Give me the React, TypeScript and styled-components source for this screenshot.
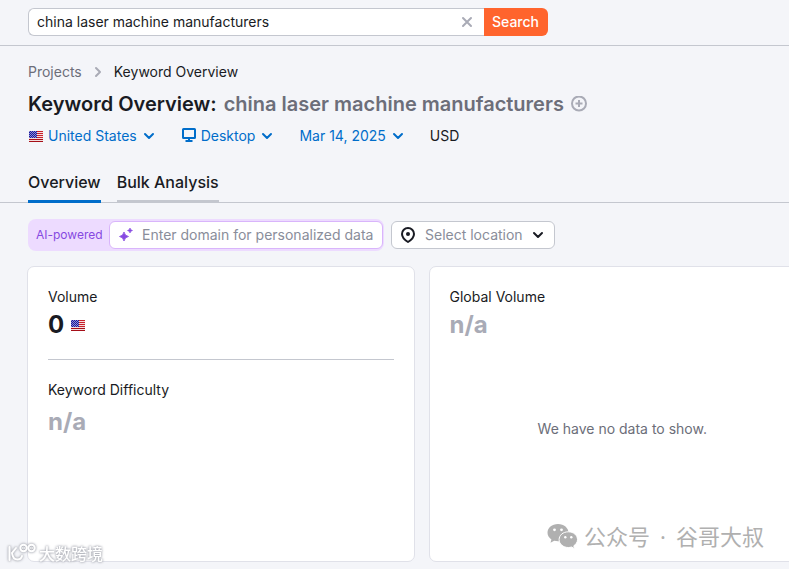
import React, { useState } from "react";
import styled, { createGlobalStyle } from "styled-components";

const GlobalStyle = createGlobalStyle`
  *, *::before, *::after { box-sizing: border-box; }
  body {
    margin: 0;
    background: #f4f5f9;
    color: #191b23;
    font-family: Inter, "Noto Sans CJK SC", sans-serif;
    font-size: 14px;
    line-height: 20px;
  }
  button, input { font: inherit; }
`;

const Page = styled.div`
  position: relative;
  min-height: 100vh;
  overflow: hidden;
  padding-bottom: 7px;
`;

const Header = styled.header`
  padding: 8px 28px 9px;
  border-bottom: 1px solid #c4c7cf;
`;

const SearchForm = styled.form`
  display: flex;
  height: 28px;
  max-width: 520px;
`;

const SearchField = styled.div`
  display: flex;
  flex: 1;
  align-items: center;
  background: #fff;
  border: 1px solid #c4c7cf;
  border-right: 0;
  border-radius: 6px 0 0 6px;
`;

const SearchInput = styled.input`
  flex: 1;
  min-width: 0;
  padding: 0 8px;
  border: 0;
  outline: 0;
  background: transparent;
  color: #191b23;
`;

const IconButton = styled.button`
  display: inline-flex;
  align-items: center;
  padding: 0;
  border: 0;
  background: none;
  color: #a9abb6;
  cursor: pointer;
`;

const ClearButton = styled(IconButton)`
  padding: 0 11px 0 10px;
`;

const SubmitButton = styled.button`
  padding: 0 9px 0 8px;
  border: 0;
  border-radius: 0 6px 6px 0;
  background: #ff642d;
  color: #fff;
  font-weight: 500;
  cursor: pointer;
`;

const Intro = styled.section`
  padding: 16px 28px 0;
`;

const Breadcrumbs = styled.nav`
  display: flex;
  align-items: center;
  gap: 12px;
`;

const Crumb = styled.a`
  color: #6c6e79;
  text-decoration: none;
  &[aria-current] { color: #191b23; }
`;

const TitleRow = styled.div`
  display: flex;
  align-items: center;
  gap: 7px;
  margin-top: 8px;
`;

const Title = styled.h1`
  margin: 0;
  font-size: 20px;
  font-weight: 600;
  line-height: 28px;
  white-space: nowrap;
`;

const Keyword = styled.span`
  margin-left: 7px;
  color: #6c6e79;
`;

const Filters = styled.div`
  display: flex;
  align-items: center;
  gap: 26px;
  margin-top: 8px;
  padding-left: 1px;
`;

const FilterButton = styled.button`
  display: inline-flex;
  align-items: center;
  gap: 5px;
  padding: 0;
  border: 0;
  background: none;
  color: #006dca;
  white-space: nowrap;
  cursor: pointer;
`;

const FilterLabel = styled.span`
  margin-right: 1px;
`;

const Tabs = styled.nav`
  display: flex;
  gap: 16px;
  margin-top: 24px;
  padding: 0 28px;
  border-bottom: 1px solid #c4c7cf;
`;

const Tab = styled.a<{ $active?: boolean }>`
  margin-bottom: -1px;
  padding: 0 0 6px;
  border-bottom: 3px solid ${(p) => (p.$active ? "#006dca" : "#c4c7cf")};
  color: #191b23;
  font-size: 16px;
  font-weight: 500;
  line-height: 24px;
  text-decoration: none;
`;

const Toolbar = styled.div`
  display: flex;
  align-items: center;
  gap: 7px;
  padding: 16px 28px 15px;
`;

const AiGroup = styled.label`
  display: flex;
  align-items: center;
  width: 356px;
  padding: 2px 1px 2px 8px;
  border-radius: 8px;
  background: #eddbff;
  color: #8649e1;
`;

const AiCaption = styled.span`
  width: 67px;
  font-size: 12px;
  white-space: nowrap;
`;

const AiField = styled.span`
  display: flex;
  flex: 1;
  align-items: center;
  gap: 8px;
  height: 28px;
  margin-left: 6px;
  padding-left: 8px;
  border: 1px solid #d9b5fb;
  border-radius: 6px;
  background: #fff;
`;

const DomainInput = styled.input`
  flex: 1;
  min-width: 0;
  padding: 0;
  border: 0;
  outline: 0;
  background: transparent;
  &::placeholder { color: #898d9a; opacity: 1; }
`;

const LocationButton = styled.button`
  display: inline-flex;
  align-items: center;
  gap: 9px;
  height: 28px;
  padding: 0 10px 0 8px;
  border: 1px solid #c4c7cf;
  border-radius: 6px;
  background: #fff;
  color: #191b23;
  white-space: nowrap;
  cursor: pointer;
`;

const LocationLabel = styled.span`
  color: #898d9a;
`;

const Cards = styled.main`
  display: grid;
  grid-template-columns: repeat(2, minmax(0, 1fr));
  gap: 14px;
  margin: 0 -27px 0 27px;
`;

const Card = styled.section`
  display: flex;
  flex-direction: column;
  min-height: 296px;
  padding: 20px;
  border: 1px solid #e0e1e9;
  border-radius: 7px;
  background: #fff;
`;

const Metric = styled.div`
  & + & {
    margin-top: 18px;
    padding-top: 20px;
    border-top: 1px solid #c4c7cf;
  }
`;

const MetricName = styled.h2`
  margin: 0;
  font-size: 14px;
  font-weight: 400;
  line-height: 20px;
`;

const MetricValue = styled.div<{ $muted?: boolean; $spaced?: boolean }>`
  display: flex;
  align-items: center;
  gap: 7px;
  margin-top: ${(p) => (p.$spaced ? "6px" : "2px")};
  color: ${(p) => (p.$muted ? "#a9abb6" : "#191b23")};
  font-size: 24px;
  font-weight: 700;
  line-height: 32px;
`;

const EmptyNote = styled.p`
  margin: auto;
  padding-bottom: 24px;
  color: #6c6e79;
`;

const AccountMark = styled.div`
  position: absolute;
  right: 25px;
  bottom: 17px;
  display: flex;
  align-items: center;
  gap: 6px;
  color: #b0b0b0;
  font-family: "Noto Sans", "Noto Sans CJK SC", sans-serif;
  font-size: 22px;
  line-height: 32px;
  white-space: nowrap;
`;

const AccountName = styled.span`
  display: flex;
  gap: 10px;
`;

const SiteMark = styled.div`
  position: absolute;
  left: 8px;
  bottom: 6px;
  display: flex;
  align-items: center;
  gap: 2px;
  color: #fff;
  font-family: "Noto Sans CJK SC", sans-serif;
  font-size: 16px;
  font-weight: 500;
  line-height: 20px;
  filter: drop-shadow(0 0 1px #a9abb3) drop-shadow(0 0 1px #c4c6cc);
`;

function Flag() {
  return (
    <svg width="14" height="11" viewBox="0 0 14 11" shapeRendering="crispEdges" aria-hidden="true">
      <rect width="14" height="11" fill="#f3dede" />
      {[0, 2, 4, 6, 8, 10].map((y) => (
        <rect key={y} y={y} width="14" height="1" fill={y > 6 ? "#a50f18" : "#c9202c"} />
      ))}
      <rect width="8" height="7" fill="#1a1a9c" />
      {[0, 1, 2, 3, 4, 5, 6].flatMap((y) =>
        [0, 2, 4, 6].map((x) => (
          <rect key={`${x}-${y}`} x={x + (y % 2)} y={y} width="1" height="1" fill="#8c8cd4" />
        ))
      )}
    </svg>
  );
}

function ChevronDown() {
  return (
    <svg width="12" height="8" viewBox="0 0 12 8" fill="none" stroke="currentColor" strokeWidth="2" strokeLinecap="round" strokeLinejoin="round" aria-hidden="true">
      <path d="M2 2l4 4 4-4" />
    </svg>
  );
}

function ChevronRight() {
  return (
    <svg width="8" height="12" viewBox="0 0 8 12" fill="none" stroke="#a9abb6" strokeWidth="2" strokeLinecap="round" strokeLinejoin="round" aria-hidden="true">
      <path d="M2 2l4 4-4 4" />
    </svg>
  );
}

function Monitor() {
  return (
    <svg width="15" height="16" viewBox="0 0 15 16" fill="none" aria-hidden="true">
      <rect x="2" y="1" width="12" height="9" rx="0.5" stroke="currentColor" strokeWidth="2" />
      <path d="M7 10h2v2h2.500v2h-7v-2H7z" fill="currentColor" />
    </svg>
  );
}

function Cross() {
  return (
    <svg width="12" height="12" viewBox="0 0 12 12" fill="none" stroke="currentColor" strokeWidth="2" strokeLinecap="round" aria-hidden="true">
      <path d="M2 2l8 8M10 2l-8 8" />
    </svg>
  );
}

function PlusCircle() {
  return (
    <svg width="16" height="16" viewBox="0 0 16 16" fill="none" stroke="currentColor" strokeWidth="2" aria-hidden="true">
      <circle cx="8" cy="7.500" r="7" />
      <path d="M8 4v7M4.500 7.500h7" />
    </svg>
  );
}

function Sparkles() {
  return (
    <svg width="16" height="16" viewBox="0 0 16 16" fill="#8649e1" aria-hidden="true">
      <path d="M6 5Q6.700 8.800 10.500 9.500Q6.700 10.200 6 14Q5.300 10.200 1.500 9.500Q5.300 8.800 6 5z" stroke="#8649e1" strokeWidth="0.800" strokeLinejoin="round" />
      <path d="M12 1Q12.400 3.100 14.500 3.500Q12.400 3.900 12 6Q11.600 3.900 9.500 3.500Q11.600 3.100 12 1z" stroke="#8649e1" strokeWidth="0.600" strokeLinejoin="round" />
    </svg>
  );
}

function Pin() {
  return (
    <svg width="16" height="16" viewBox="0 0 16 16" fill="none" aria-hidden="true">
      <path d="M8 15C4.800 13 2 10.500 2 7a6 6 0 0 1 12 0c0 3.500-2.800 6-6 8z" stroke="#191b23" strokeWidth="2" strokeLinejoin="round" />
      <circle cx="8" cy="7" r="2" fill="#191b23" />
    </svg>
  );
}

function ChatBubbles() {
  return (
    <svg width="31" height="26" viewBox="0 0 31 26" aria-hidden="true">
      <path d="M11 1C5 1 .500 4.900.500 9.700c0 2.800 1.500 5.100 3.900 6.700L3.500 19.800l3.700-2c1.200.3 2.400.5 3.800.5 6 0 10.500-3.900 10.500-8.600S17 1 11 1z" fill="currentColor" />
      <path d="M21.300 8.800c-5.200 0-9.200 3.400-9.200 7.800s4 7.900 9.200 7.900c1.200 0 2.200-.2 3.200-.5l3.100 1.700-.8-2.900c2.200-1.400 3.700-3.600 3.700-6.200 0-4.400-4-7.800-9.200-7.800z" fill="currentColor" stroke="#fff" strokeWidth="1" />
      <g fill="#fff">
        <circle cx="7.500" cy="6.800" r="1.400" />
        <circle cx="14.500" cy="6.800" r="1.400" />
        <circle cx="18.300" cy="14.300" r="1.200" />
        <circle cx="24.300" cy="14.300" r="1.200" />
      </g>
    </svg>
  );
}

function SiteLogo() {
  return (
    <svg width="29" height="20" viewBox="0 0 29 20" fill="none" stroke="currentColor" strokeWidth="2" strokeLinecap="round" aria-hidden="true">
      <path d="M1.500 4v13M8 5l-4 5c.5 4 2.500 6.500 5.500 6.500 2.500 0 4-1.500 4.500-3.500" />
      <circle cx="15.500" cy="5" r="3.200" />
      <circle cx="23.500" cy="5" r="3.200" />
      <circle cx="15.500" cy="5" r="0.300" />
      <circle cx="23.500" cy="5" r="0.300" />
    </svg>
  );
}

export default function App() {
  const [query, setQuery] = useState("china laser machine manufacturers");

  return (
    <Page>
      <GlobalStyle />
      <Header>
        <SearchForm role="search" onSubmit={(e) => e.preventDefault()}>
          <SearchField>
            <SearchInput aria-label="Keyword" value={query} onChange={(e) => setQuery(e.target.value)} />
            <ClearButton type="button" aria-label="Clear" onClick={() => setQuery("")}>
              <Cross />
            </ClearButton>
          </SearchField>
          <SubmitButton type="submit">Search</SubmitButton>
        </SearchForm>
      </Header>

      <Intro>
        <Breadcrumbs aria-label="Breadcrumb">
          <Crumb href="#projects">Projects</Crumb>
          <ChevronRight />
          <Crumb href="#overview" aria-current="page">Keyword Overview</Crumb>
        </Breadcrumbs>
        <TitleRow>
          <Title>
            Keyword Overview:<Keyword>china laser machine manufacturers</Keyword>
          </Title>
          <IconButton type="button" aria-label="Add keyword">
            <PlusCircle />
          </IconButton>
        </TitleRow>
        <Filters>
          <FilterButton type="button">
            <Flag />
            <FilterLabel>United States</FilterLabel>
            <ChevronDown />
          </FilterButton>
          <FilterButton type="button">
            <Monitor />
            <FilterLabel>Desktop</FilterLabel>
            <ChevronDown />
          </FilterButton>
          <FilterButton type="button">
            <FilterLabel>Mar 14, 2025</FilterLabel>
            <ChevronDown />
          </FilterButton>
          <span>USD</span>
        </Filters>
      </Intro>

      <Tabs aria-label="Sections">
        <Tab href="#overview" $active aria-current="page">Overview</Tab>
        <Tab href="#bulk">Bulk Analysis</Tab>
      </Tabs>

      <Toolbar>
        <AiGroup>
          <AiCaption>AI-powered</AiCaption>
          <AiField>
            <Sparkles />
            <DomainInput placeholder="Enter domain for personalized data" />
          </AiField>
        </AiGroup>
        <LocationButton type="button">
          <Pin />
          <LocationLabel>Select location</LocationLabel>
          <ChevronDown />
        </LocationButton>
      </Toolbar>

      <Cards>
        <Card>
          <Metric>
            <MetricName>Volume</MetricName>
            <MetricValue>
              0 <Flag />
            </MetricValue>
          </Metric>
          <Metric>
            <MetricName>Keyword Difficulty</MetricName>
            <MetricValue $muted $spaced>n/a</MetricValue>
          </Metric>
        </Card>
        <Card>
          <Metric>
            <MetricName>Global Volume</MetricName>
            <MetricValue $muted>n/a</MetricValue>
          </Metric>
          <EmptyNote>We have no data to show.</EmptyNote>
        </Card>
      </Cards>

      <AccountMark>
        <ChatBubbles />
        <AccountName>
          <span>公众号</span>
          <span>·</span>
          <span>谷哥大叔</span>
        </AccountName>
      </AccountMark>
      <SiteMark>
        <SiteLogo />
        <span>大数跨境</span>
      </SiteMark>
    </Page>
  );
}
